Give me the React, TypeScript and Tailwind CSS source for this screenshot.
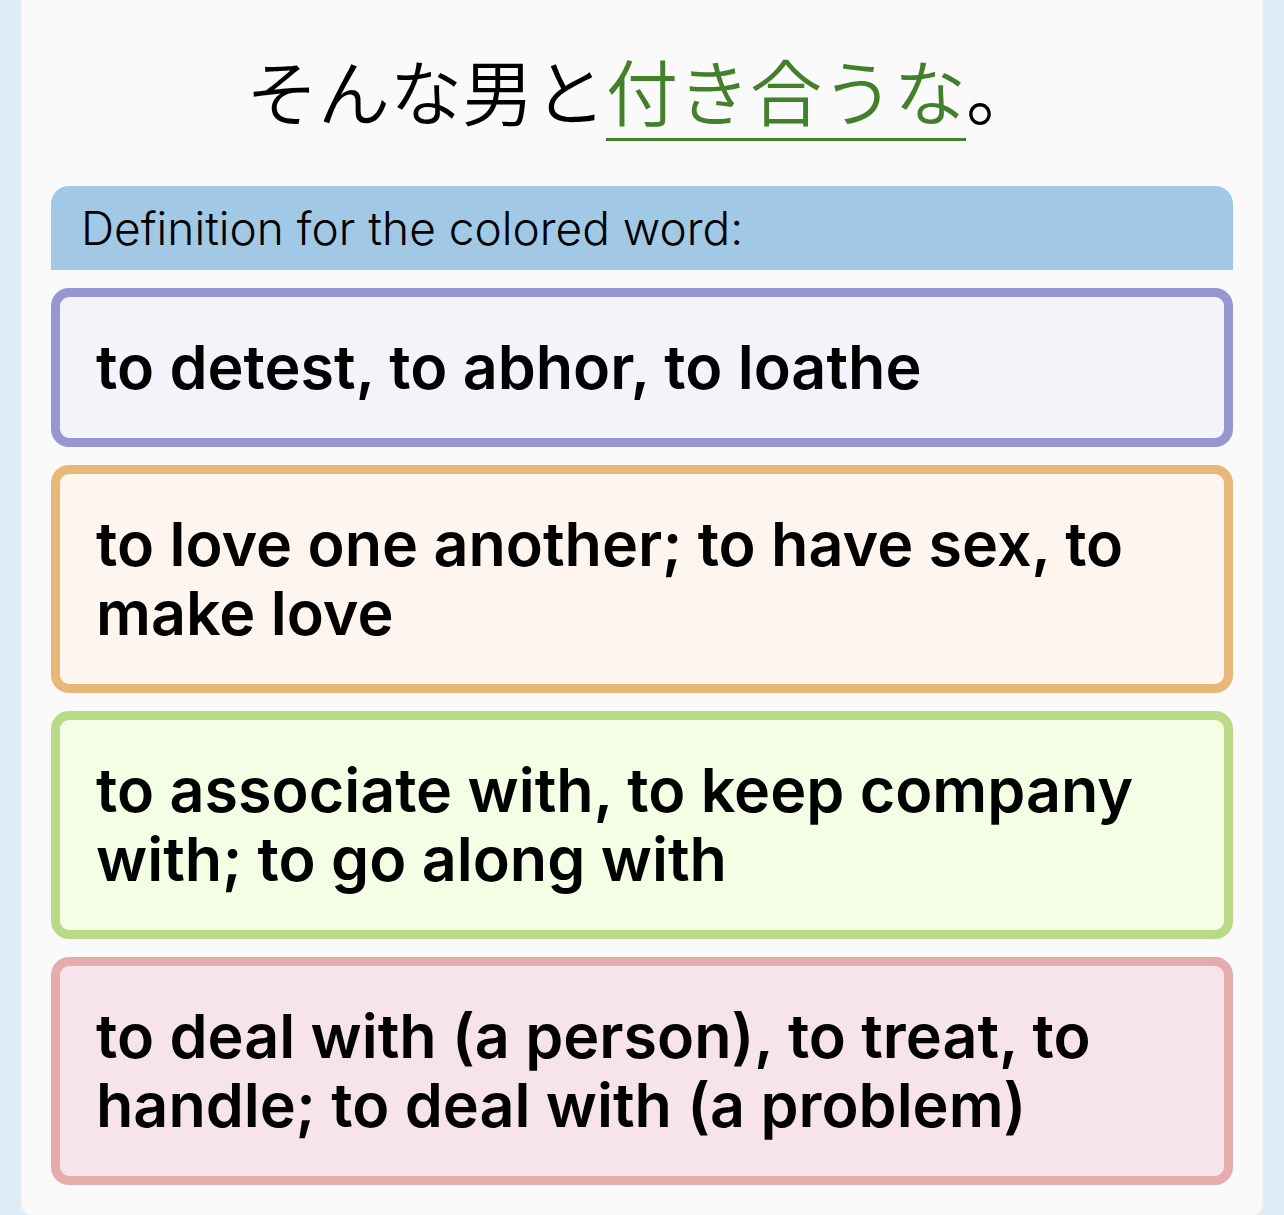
const choices = [
    {
        text: 'to detest, to abhor, to loathe',
        color: 'border-[#9796d0] bg-[#f4f3f9]',
    },
    {
        text: 'to love one another; to have sex, to make love',
        color: 'border-[#e8b878] bg-[#fdf5ee]',
    },
    {
        text: 'to associate with, to keep company with; to go along with',
        color: 'border-[#b9da86] bg-[#f4fee4]',
    },
    {
        text: 'to deal with (a person), to treat, to handle; to deal with (a problem)',
        color: 'border-[#e6abab] bg-[#f6e4ea]',
    },
]

function Sentence() {
    return (
        <h1
            lang="ja"
            className="text-center font-['Noto_Sans_CJK_JP',sans-serif] text-[72px] leading-[86px] font-[350]"
        >
            そんな男と
            <span className="inline-block border-b-3 border-[#42802a] pb-1.5 text-[#42802a]">付き合うな</span>。
        </h1>
    )
}

export default function App() {
    return (
        <div className="min-h-screen bg-[#deebf8] px-5 font-[Inter,sans-serif] text-black">
            <main className="rounded-b-xl border-x-2 border-[#efefef] bg-[#fafafa] px-[29px] pt-[46px] pb-[30px]">
                <Sentence />
                <h2 className="mt-[45px] rounded-t-[18px] bg-[#a1c8e4] px-[30px] text-[46px] leading-[84px] font-light">
                    Definition for the colored word:
                </h2>
                <div className="mt-[18px] flex flex-col gap-[18px]">
                    {choices.map((choice) => (
                        <button
                            key={choice.text}
                            type="button"
                            className={`rounded-[18px] border-9 px-9 py-9 text-left text-[61px] leading-[69px] font-semibold ${choice.color}`}
                        >
                            {choice.text}
                        </button>
                    ))}
                </div>
            </main>
        </div>
    )
}
